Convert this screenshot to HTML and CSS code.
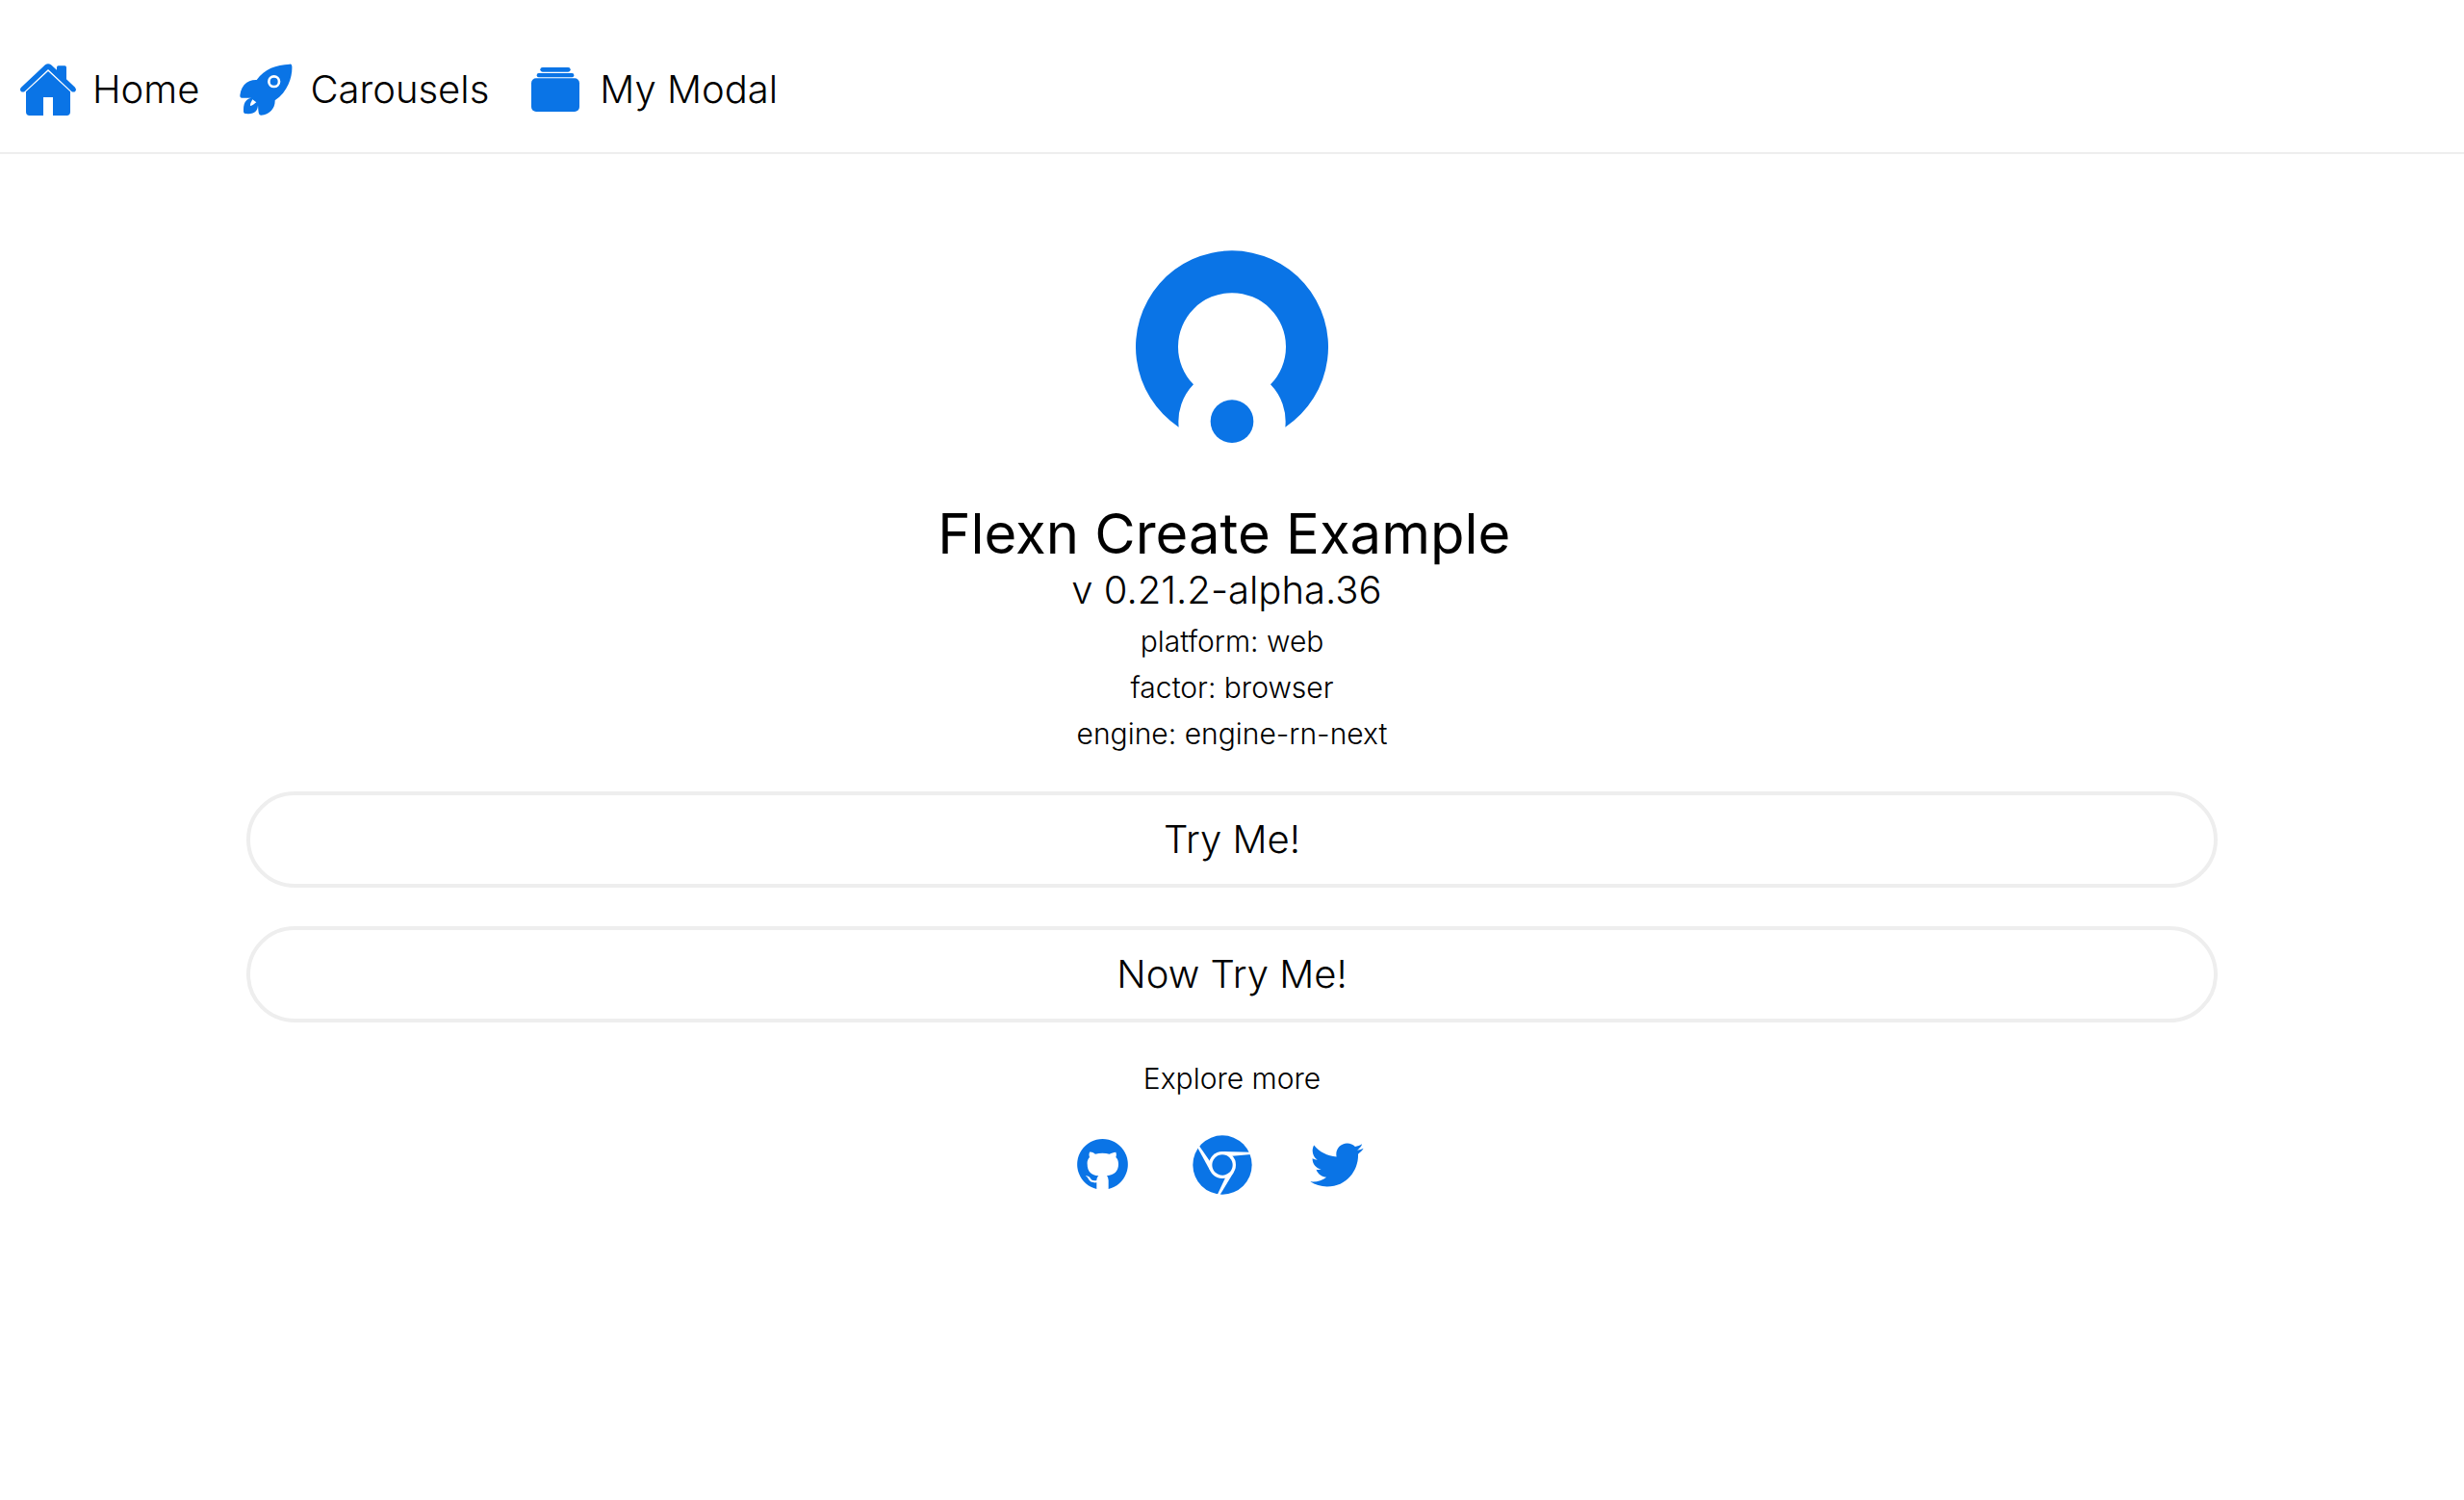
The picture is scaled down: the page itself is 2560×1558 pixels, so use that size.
FILE: index.html
```html
<!DOCTYPE html>
<html lang="en">
<head>
<meta charset="utf-8">
<meta name="viewport" content="width=device-width, initial-scale=1">
<title>Flexn Create Example</title>
<link rel="stylesheet" href="styles.css">
</head>
<body>
<nav class="menu">
  <a class="menu-item" href="#home">
    <svg class="menu-icon" viewBox="0 0 180 180" aria-hidden="true"><path d="M3 90q0-4 3-7L81 13q9-6 18 0l18 16v-8q0-5 5-5h20q5 0 5 5v37l27 25q5 6 1 12-5 5-12 1L90 27 17 96q-7 4-12-1-2-2-2-5z"/><path d="M90 33l69 64v63q0 11-11 11h-43v-57H75v57H32q-11 0-11-11V97z"/></svg>
    <span>Home</span>
  </a>
  <a class="menu-item" href="#carousels">
    <svg class="menu-icon" viewBox="0 9 180 180" aria-hidden="true"><path fill-rule="evenodd" d="M165 20c4-1 6 1 7 6 2 28-10 78-53 107 1 24-16 44-43 46-8 0-8-9-9-17l-1-14c-1 20-12 29-37 26-5 0-8-2-8-7-1-24 6-38 24-42H18c-6 1-8-2-8-8 4-33 24-49 52-48 25-35 60-47 103-49zM116 54a20 20 0 1 0 0 40 20 20 0 0 0 0-40zm0 8a12 12 0 1 1 0 24 12 12 0 0 1 0-24zM49 130c-4 9-8 14-7 20 7-1 14-7 19-11z"/></svg>
    <span>Carousels</span>
  </a>
  <a class="menu-item" href="#modal">
    <svg class="menu-icon" viewBox="0 9 180 180" aria-hidden="true"><rect x="43" y="30" width="94" height="14" rx="7"/><rect x="32" y="48" width="116" height="13" rx="6"/><rect x="15" y="64" width="150" height="104" rx="15"/></svg>
    <span>My Modal</span>
  </a>
</nav>
<main class="page">
  <svg class="logo" viewBox="0 0 600 600" role="img" aria-label="Flexn"><path d="M134 551A300 300 0 1 1 466 551A166 166 0 0 0 420 418A168 168 0 1 0 180 418A166 166 0 0 0 134 551z"/><circle cx="300" cy="533" r="67"/></svg>
  <h1 class="title">Flexn Create Example </h1>
  <p class="version">v 0.21.2-alpha.36 </p>
  <div class="details">
    <p>platform: web</p>
    <p>factor: browser</p>
    <p>engine: engine-rn-next</p>
  </div>
  <div class="actions">
    <button class="action" type="button">Try Me!</button>
    <button class="action" type="button">Now Try Me!</button>
  </div>
  <p class="explore">Explore more</p>
  <div class="social">
    <a href="#github" aria-label="GitHub"><svg class="social-icon" viewBox="9 12 180 180"><path d="M82 177A79 79 0 1 1 119 177V150q0-9-5-14C137 133 150 122 150 99c0-10-3-16-8-21 2-6 2-10 0-16-8 0-13 3-20 6-14-4-30-4-44 0-7-5-12-7-18-6-2 6-2 10 0 16-5 6-8 12-7 21 0 24 13 35 35 37-4 4-6 9-6 14-9 2-16 0-19-6-4-6-9-9-16-8 3 2 6 3 9 9 4 10 14 13 26 12z"/></svg></a>
    <a href="#chrome" aria-label="Chrome"><svg class="social-icon-wide" viewBox="-3 15 204 186"><circle cx="108" cy="108" r="92"/><g class="cutout"><circle cx="108" cy="108" r="42"/><path id="ray" d="M108 66l88 2 2 7-60 5z"/><use href="#ray" transform="rotate(120 108 108)"/><use href="#ray" transform="rotate(240 108 108)"/></g><circle cx="108" cy="108" r="32"/></svg></a>
    <a href="#twitter" aria-label="Twitter"><svg class="social-icon" viewBox="0 0 512 512"><path d="M492 109.5c-17.4 7.7-36 12.9-55.6 15.3 20-12 35.4-31 42.6-53.6-18.7 11.1-39.4 19.2-61.5 23.5C399.8 75.8 374.6 64 346.8 64c-53.5 0-96.8 43.4-96.8 96.9 0 7.6.8 15 2.5 22.1-80.5-4-151.9-42.6-199.6-101.3-8.3 14.3-13.1 31-13.1 48.7 0 33.6 17.2 63.3 43.2 80.7-16-.4-31-4.8-44-12.1v1.2c0 47 33.4 86.1 77.7 95-8.1 2.2-16.7 3.4-25.5 3.4-6.2 0-12.3-.6-18.2-1.8 12.3 38.5 48.1 66.5 90.5 67.3-33.1 26-74.9 41.5-120.3 41.5-7.8 0-15.5-.5-23.1-1.4C62.8 432 113.7 448 168.3 448 346.6 448 444 300.3 444 172.2c0-4.2-.1-8.4-.3-12.5C462.6 146 479 129 492 109.5z"/></svg></a>
  </div>
</main>
</body>
</html>
```
FILE: styles.css
```css
* { box-sizing: border-box; }
body { margin: 0; background: #fff; color: #000; font-family: Inter, sans-serif; font-weight: 300; font-size: 40px; line-height: 48px; }
h1, p { margin: 0; }
svg { display: block; fill: #0a74e6; }
a { color: inherit; text-decoration: none; }

.menu { display: flex; align-items: center; gap: 39px; height: 160px; padding: 28px 20px 0; border-bottom: 2px solid #eee; }
.menu-item { display: flex; align-items: center; gap: 16px; }
.menu-icon { width: 60px; height: 60px; }

.page { display: flex; flex-direction: column; align-items: center; padding: 100px 10%; }
.logo { width: 200px; height: 200px; margin-bottom: 60px; }
/* The trailing space is part of both lines, so it is kept when they are centred. */
.title, .version { white-space: pre; }
.title { font-size: 58px; font-weight: 400; line-height: 68px; }
.version { line-height: 50px; }
.details { padding-top: 4px; text-align: center; }
.details, .explore { font-size: 30px; line-height: 48px; }
.actions { display: flex; flex-direction: column; gap: 40px; width: 100%; margin-top: 36px; }
.action { width: 100%; height: 100px; border: 4px solid #eee; border-radius: 50px; background: none; color: inherit; font: inherit; }
.explore { margin-top: 34px; }
.social { display: flex; align-items: center; gap: 58px; margin-top: 35px; padding-right: 26px; }
.social-icon { width: 60px; height: 60px; }
.social-icon-wide { width: 68px; height: 62px; }
.cutout { fill: #fff; }
```
